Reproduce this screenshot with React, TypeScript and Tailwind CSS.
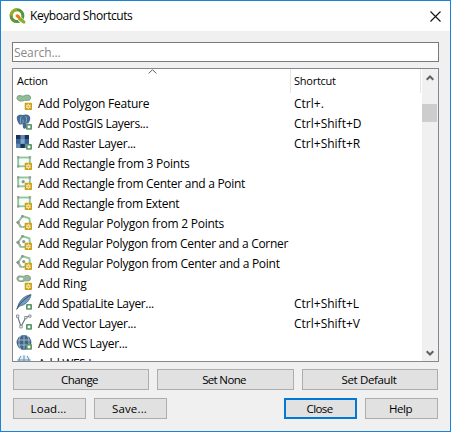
import type { ReactNode } from "react";

type IconName =
  | "polygon" | "postgis" | "raster" | "rect" | "rectCenter" | "pentagon"
  | "pentagonCenter" | "ring" | "feather" | "vector" | "globe" | "globeLight";

const Star = () => (
  <g>
    <rect x="8.7" y="8.7" width="7.3" height="7.3" rx=".8" fill="#cba11a" />
    <path d="M12.4 9.6v5.6M10 11l4.8 2.8M14.8 11L10 13.8" stroke="#f6e6a4" strokeWidth=".9" />
    <circle cx="12.4" cy="12.4" r="1.5" fill="#d9b33a" stroke="#fff6cf" strokeWidth=".9" />
  </g>
);

const Plus = () => (
  <g>
    <rect x="10" y="10" width="6" height="5.7" rx="1" fill="#5c9768" />
    <rect x="11.7" y="11.6" width="2.6" height="2.6" fill="#fff" />
  </g>
);

const Pentagon = () => (
  <g>
    <path d="M2 8.5L6.5 2.2L13.3 4.2L14 9L8 13L4.4 12.8Z" fill="#fff" stroke="#8fc79c" strokeWidth="2" />
    <path d="M2 8.5L5 12.8" stroke="#a8ada8" strokeWidth="2" />
    <circle cx="2" cy="8.3" r="1.6" fill="#929292" />
    <circle cx="6.4" cy="2.3" r="1.4" fill="#929292" />
  </g>
);

const Rect = () => (
  <g>
    <rect x="2.2" y="3.5" width="11.6" height="8.8" fill="#f7fbf7" stroke="#8fc79c" strokeWidth="1.9" />
    <path d="M1 2.3h2.3v2.3H1zM12.8 2.3h2.3v2.3h-2.3zM1 11.2h2.3v2.3H1z" fill="#969b96" />
  </g>
);

const Globe = ({ fill, line }: { fill: string; line: string }) => (
  <g>
    <circle cx="8" cy="8.5" r="7.4" fill={fill} />
    <path d="M1.5 6h13M1.5 11h13M8 1.5v14M4.7 2c-2.3 4-2.3 9 0 13M11.3 2c2.3 4 2.3 9 0 13" stroke={line} strokeWidth=".9" fill="none" />
  </g>
);

const drawings: Record<IconName, ReactNode> = {
  polygon: (
    <>
      <path d="M1 3.7C1 1.5 3.5 1.2 5.5 2C8 2.8 9 .9 12 1.1C15 1.3 15.4 5.8 12.8 6.2C10 6.5 9.5 6 7 6.8C4 7.7 1 6.5 1 3.7Z" fill="#8fbd96" stroke="#7c9c82" />
      <Star />
    </>
  ),
  postgis: (
    <>
      <path d="M1 2.5C2 .5 5 .3 6.5 1.1C9 .2 12.5 .3 13.8 2.4C15 5 13.4 8.3 11.9 9.6L10.4 9.4L10 14Q8.3 15.8 7 13.7L6.6 10L4 10.8C2 9.5 .2 5 1 2.5Z" fill="#456c92" />
      <path d="M5.3 2.5C3.9 5 4.6 7.5 4.5 9.5M9.7 2.3C11.2 4.5 10.2 7 10.1 8.8M6.6 9.3Q7.5 8 6.8 5.5" stroke="#a0b8cd" strokeWidth=".8" fill="none" />
      <Plus />
    </>
  ),
  raster: (
    <>
      <path d="M0 1h13v13H0z" fill="#5f88b3" />
      <path d="M0 1h4.4v4.3H0zM8.8 1H13v4.3H8.8zM4.4 9.7h4.4V14H4.4z" fill="#1b3357" />
      <path d="M4.4 5.3h4.4v4.4H4.4z" fill="#82a9cd" />
      <path d="M0 5.3h4.4v4.4H0zM8.8 5.3H13v4.4H8.8z" fill="#3a6291" />
      <Plus />
    </>
  ),
  rect: <><Rect /><Star /></>,
  rectCenter: <><Rect /><circle cx="7.2" cy="7.7" r="1.6" fill="#929292" /><Star /></>,
  pentagon: <><Pentagon /><Star /></>,
  pentagonCenter: <><Pentagon /><circle cx="7.7" cy="7.6" r="1.6" fill="#929292" /><Star /></>,
  ring: (
    <>
      <path d="M1 4.4C1 1.9 3.7 1.5 5.8 2.3C8 2.9 9.4 1.3 11.7 1.4C15 1.5 15.4 6.4 12.8 6.8C10 7 9.4 6.6 7 7.3C4 8 1 7.1 1 4.4Z" fill="#8fbd96" stroke="#84948a" />
      <path d="M3.1 4.6Q4.6 3.3 6.8 4.3Q7.6 5.4 5.5 5.9Q3.3 6.3 3.1 4.6Z" fill="#fff" stroke="#fff" strokeWidth=".6" />
      <Star />
    </>
  ),
  feather: (
    <>
      <path d="M1.4 14.5C2.3 8.4 6.6 2 15 .6C14.1 5.8 10.5 10.8 3.2 12.2Z" fill="#719bc1" stroke="#456783" strokeWidth=".8" />
      <path d="M.6 15.5C3 10 8 5.5 14.5 1" stroke="#344e68" strokeWidth="1" fill="none" />
      <Plus />
    </>
  ),
  vector: (
    <>
      <path d="M1.6 2.3L5 12.5L9.8 3.5L14 1.8" stroke="#66717d" strokeWidth="1.1" fill="none" />
      <path d="M.5 1h2.3v2.4H.5zM3.8 11.5h2.4v2.4H3.8zM8.7 2.5h2.2v2.2H8.7zM12.8 1H15v2.2h-2.2z" fill="#fff" stroke="#747e88" strokeWidth=".8" />
      <Plus />
    </>
  ),
  globe: <><Globe fill="#426486" line="#a9bfd2" /><Plus /></>,
  globeLight: <Globe fill="#e4eef6" line="#5883aa" />,
};

const rows: { icon: IconName; name: string; track: string; keys?: string }[] = [
  { icon: "polygon", name: "Add Polygon Feature", track: "tracking-[-0.25px]", keys: "Ctrl+." },
  { icon: "postgis", name: "Add PostGIS Layers...", track: "tracking-[-0.34px]", keys: "Ctrl+Shift+D" },
  { icon: "raster", name: "Add Raster Layer...", track: "tracking-[-0.35px]", keys: "Ctrl+Shift+R" },
  { icon: "rect", name: "Add Rectangle from 3 Points", track: "tracking-[-0.25px]" },
  { icon: "rectCenter", name: "Add Rectangle from Center and a Point", track: "tracking-[-0.28px]" },
  { icon: "rect", name: "Add Rectangle from Extent", track: "tracking-[-0.31px]" },
  { icon: "pentagon", name: "Add Regular Polygon from 2 Points", track: "tracking-[-0.24px]" },
  { icon: "pentagonCenter", name: "Add Regular Polygon from Center and a Corner", track: "tracking-[-0.29px]" },
  { icon: "pentagonCenter", name: "Add Regular Polygon from Center and a Point", track: "tracking-[-0.27px]" },
  { icon: "ring", name: "Add Ring", track: "tracking-[-0.15px]" },
  { icon: "feather", name: "Add SpatiaLite Layer...", track: "tracking-[-0.33px]", keys: "Ctrl+Shift+L" },
  { icon: "vector", name: "Add Vector Layer...", track: "tracking-[-0.35px]", keys: "Ctrl+Shift+V" },
  { icon: "globe", name: "Add WCS Layer...", track: "tracking-[-0.27px]" },
  { icon: "globeLight", name: "Add WFS Layer...", track: "tracking-[-0.27px]" },
];

function Button({ children, className }: { children: ReactNode; className: string }) {
  return (
    <button className={`flex h-[21px] items-center justify-center bg-[#e1e1e1] leading-4 ${className}`}>
      {children}
    </button>
  );
}

export default function App() {
  return (
    <div className="flex h-[432px] w-[451px] flex-col border border-[#1883d7] bg-[#f0f0f0] font-['Open_Sans','Noto_Sans',sans-serif] text-[12px] whitespace-nowrap text-black">
      <header className="flex h-[30px] shrink-0 items-center bg-white pr-[9px] pl-2">
        <svg width="17" height="17" viewBox="0 0 17 17" className="shrink-0">
          <circle cx="8" cy="7.7" r="5.9" fill="#fff" stroke="#589632" strokeWidth="3" />
          <path d="M2.1 7.7A5.9 5.9 0 0 1 8 1.8" fill="none" stroke="#93b023" strokeWidth="3" />
          <path d="M10.5 10.5L16 16" stroke="#fff" strokeWidth="5" />
          <path d="M9.2 9.2h3l4 4v2.3h-2.2L9.2 11.8z" fill="#8aad35" />
          <path d="M6.7 6.5h2.7l1.7 1.7v2.6H9.4L6.7 8.8z" fill="#ee7913" />
        </svg>
        <h1 className="ml-1 tracking-[-0.43px]">Keyboard Shortcuts</h1>
        <svg width="11" height="11" viewBox="0 0 11 11" className="ml-auto" stroke="#111" strokeWidth="1.1">
          <path d="M.5.5l10 10M10.5.5l-10 10" />
        </svg>
      </header>

      <main className="flex flex-col px-[11px] pt-[11px]">
        <input
          className="h-[20px] w-[427px] border border-[#7a7a7a] bg-white px-[1px] tracking-[-0.1px] outline-none placeholder:text-[#888]"
          placeholder="Search..."
        />

        <section className="mt-[6px] flex h-[294px] w-[427px] border border-[#828790] bg-white">
          <div className="flex min-w-0 flex-1 flex-col overflow-hidden">
            <div className="flex h-6 shrink-0 pr-[1px] text-[11px] tracking-[-0.25px]">
              <div className="relative w-[278px] border-r border-[#e5e5e5] pt-1 pl-1 leading-4">
                Action
                <svg width="9" height="5" viewBox="0 0 9 5" className="absolute top-0 left-[135px]">
                  <path d="M.7 4.5L4.5.7l3.8 3.8" fill="none" stroke="#5a5a5a" />
                </svg>
              </div>
              <div className="flex-1 border-r border-[#e5e5e5] pt-1 pl-[3px] leading-4">Shortcut</div>
            </div>
            {rows.map((row) => (
              <div key={row.name} className="flex h-5 shrink-0 items-center pl-[3px]">
                <svg width="16" height="16" viewBox="0 0 16 16" className="mb-[2px] shrink-0">{drawings[row.icon]}</svg>
                <span className={`mt-[2px] ml-[6px] w-[256px] leading-4 ${row.track}`}>{row.name}</span>
                <span className="mt-[2px] leading-4">{row.keys}</span>
              </div>
            ))}
          </div>
          <div className="flex w-4 flex-col items-center bg-[#f0f0f0] pt-[6px]">
            <svg width="8" height="6" viewBox="0 0 8 6" className="shrink-0">
              <path d="M.7 4.8L4 1.5l3.3 3.3" fill="none" stroke="#606060" strokeWidth="2" />
            </svg>
            <div className="mt-[23px] h-[18px] w-[15px] shrink-0 self-start bg-[#cdcdcd]" />
            <svg width="8" height="6" viewBox="0 0 8 6" className="mt-auto mb-[5px] shrink-0">
              <path d="M.7 1.2L4 4.5l3.3-3.3" fill="none" stroke="#606060" strokeWidth="2" />
            </svg>
          </div>
        </section>

        <div className="mt-[7px] ml-[1px] flex w-[425px] justify-between text-[11.5px]">
          <Button className="w-[136px] border border-[#adadad] pr-[3px] tracking-[-0.6px]">Change</Button>
          <Button className="w-[137px] border border-[#adadad] pr-[3px] tracking-[-0.65px]">Set None</Button>
          <Button className="w-[136px] border border-[#adadad] pr-[2px] tracking-[-0.35px]">Set Default</Button>
        </div>
        <div className="mt-2 ml-[1px] flex w-[425px] gap-2 text-[11.5px]">
          <Button className="w-[73px] border border-[#adadad] pr-[2px] tracking-[0.05px]">Load...</Button>
          <Button className="w-[73px] border border-[#adadad] pr-[2px] tracking-[0.15px]">Save...</Button>
          <Button className="ml-auto w-[73px] border-2 border-[#0078d7] pr-[2px] tracking-[-0.6px]">Close</Button>
          <Button className="w-[73px] border border-[#adadad] pr-[2px] tracking-[-0.5px]">Help</Button>
        </div>
      </main>
    </div>
  );
}
